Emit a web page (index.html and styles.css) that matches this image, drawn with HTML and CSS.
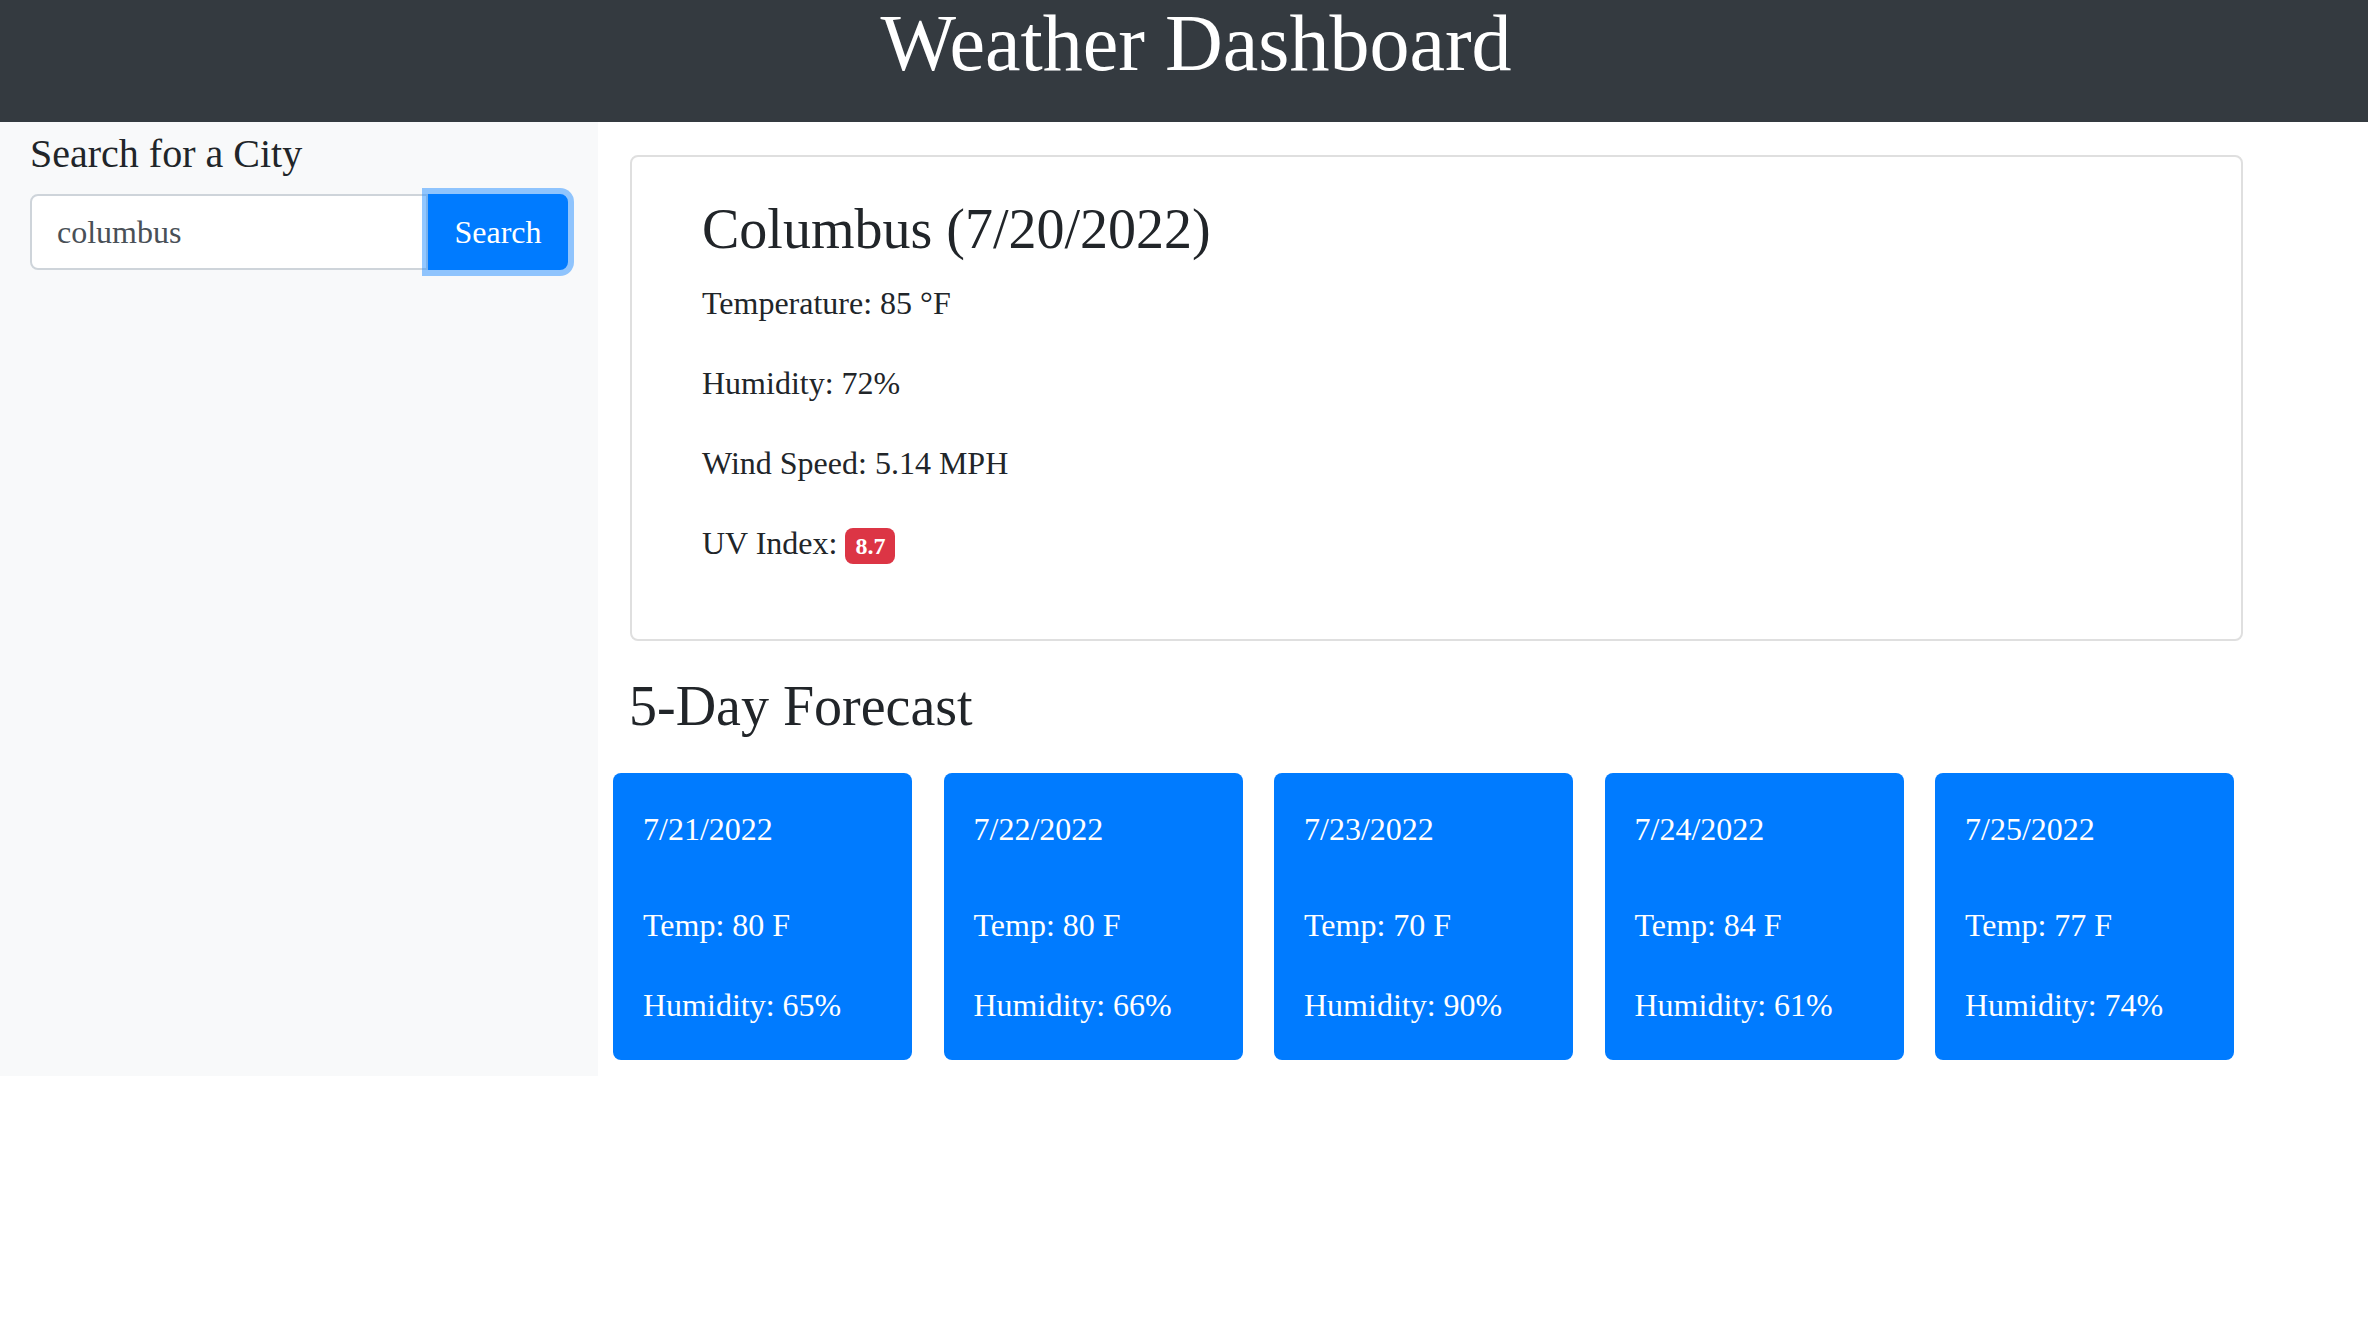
FILE: index.html
```html
<!DOCTYPE html>
<html lang="en">
<head>
<meta charset="utf-8">
<title>Weather Dashboard</title>
<link rel="stylesheet" href="styles.css">
</head>
<body>
<header class="topbar">
  <h1 class="title">Weather Dashboard</h1>
</header>
<div class="layout">
  <aside class="sidebar">
    <h5 class="side-title">Search for a City</h5>
    <div class="search-group">
      <input class="search-input" type="text" value="columbus">
      <button class="search-btn" type="button">Search</button>
    </div>
  </aside>
  <main class="main">
    <section class="current">
      <h3 class="city">Columbus (7/20/2022)</h3>
      <p class="stat">Temperature: 85 °F</p>
      <p class="stat">Humidity: 72%</p>
      <p class="stat">Wind Speed: 5.14 MPH</p>
      <p class="stat">UV Index: <span class="uv">8.7</span></p>
    </section>
    <h3 class="forecast-title">5-Day Forecast</h3>
    <div class="forecast">
      <div class="day">
        <p class="date">7/21/2022</p>
        <p class="line">Temp: 80 F</p>
        <p class="line last">Humidity: 65%</p>
      </div>
      <div class="day">
        <p class="date">7/22/2022</p>
        <p class="line">Temp: 80 F</p>
        <p class="line last">Humidity: 66%</p>
      </div>
      <div class="day">
        <p class="date">7/23/2022</p>
        <p class="line">Temp: 70 F</p>
        <p class="line last">Humidity: 90%</p>
      </div>
      <div class="day">
        <p class="date">7/24/2022</p>
        <p class="line">Temp: 84 F</p>
        <p class="line last">Humidity: 61%</p>
      </div>
      <div class="day">
        <p class="date">7/25/2022</p>
        <p class="line">Temp: 77 F</p>
        <p class="line last">Humidity: 74%</p>
      </div>
    </div>
  </main>
</div>
</body>
</html>
```
FILE: styles.css
```css
body {
  margin: 0;
  font-family: "Liberation Serif", "Times New Roman", serif;
  color: #212529;
  background: #fff;
}

.topbar {
  background: #343a40;
  height: 122px;
  box-sizing: border-box;
  padding-top: 3px;
  padding-left: 24px;
  text-align: center;
}

.title {
  margin: 0;
  font-size: 80px;
  line-height: 80px;
  font-weight: 400;
  color: #fff;
}

.layout {
  display: flex;
  align-items: stretch;
}

.sidebar {
  width: 598px;
  flex: none;
  box-sizing: border-box;
  background: #f8f9fa;
  padding: 8px 30px 0;
}

.side-title {
  font-size: 40px;
  line-height: 48px;
  font-weight: 400;
  margin: 0 0 16px;
}

.search-group {
  display: flex;
  height: 76px;
}

.search-input {
  flex: 1;
  min-width: 0;
  box-sizing: border-box;
  height: 76px;
  border: 2px solid #ced4da;
  border-radius: 8px 0 0 8px;
  padding: 0 24px 0 25px;
  font-family: "Liberation Serif", "Times New Roman", serif;
  font-size: 32px;
  color: #495057;
  background: #fff;
  outline: none;
  margin: 0;
}

.search-btn {
  width: 140px;
  flex: none;
  box-sizing: border-box;
  height: 76px;
  margin: 0;
  padding: 0;
  border: 2px solid #007bff;
  background: #007bff;
  color: #fff;
  font-family: "Liberation Serif", "Times New Roman", serif;
  font-size: 32px;
  border-radius: 0 8px 8px 0;
  box-shadow: 0 0 0 6px rgba(38, 143, 255, 0.5);
  position: relative;
  z-index: 1;
}

.main {
  flex: 1;
  padding: 33px 0 16px 15px;
}

.current {
  margin: 0 0 32px 17px;
  width: 1613px;
  box-sizing: border-box;
  border: 2px solid #dfdfdf;
  border-radius: 8px;
  padding: 39px 40px 40px 70px;
}

.city {
  font-size: 56px;
  line-height: 1.2;
  font-weight: 400;
  margin: 0 0 16px;
}

.stat {
  font-size: 32px;
  line-height: 48px;
  margin: 0 0 32px;
}

.uv {
  display: inline-block;
  background: #dc3545;
  color: #fff;
  font-weight: 700;
  font-size: 24px;
  line-height: 24px;
  padding: 6px 10px;
  border-radius: 8px;
  vertical-align: baseline;
}

.forecast-title {
  font-size: 56px;
  line-height: 1.2;
  font-weight: 400;
  margin: 0 0 33px 16px;
}

.forecast {
  display: flex;
  gap: 31.5px;
}

.day {
  width: 299px;
  flex: none;
  box-sizing: border-box;
  background: #007bff;
  color: #fff;
  border-radius: 8px;
  padding: 32px 30px 31px;
}

.date {
  font-size: 32px;
  line-height: 48px;
  margin: 0 0 48px;
}

.line {
  font-size: 32px;
  line-height: 48px;
  margin: 0 0 32px;
}

.line.last {
  margin-bottom: 0;
}
```
